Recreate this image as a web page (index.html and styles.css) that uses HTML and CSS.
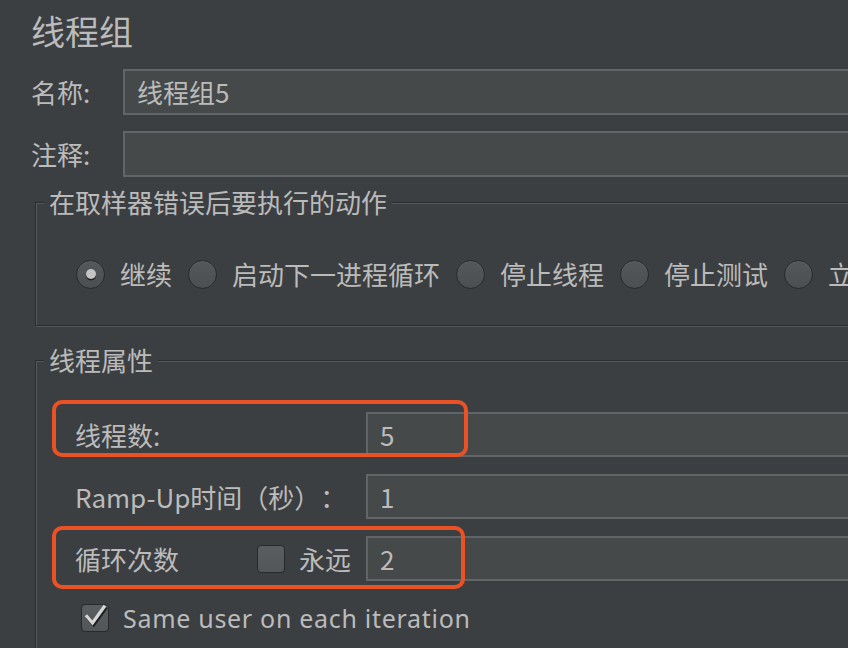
FILE: index.html
```html
<!DOCTYPE html>
<html lang="zh">
<head>
<meta charset="utf-8">
<title>线程组</title>
<link rel="stylesheet" href="styles.css">
</head>
<body>
<div class="page">
  <h1 class="title">线程组</h1>

  <div class="field-row name-row">
    <span class="field-label">名称:</span>
    <div class="text-input">线程组5</div>
  </div>
  <div class="field-row comment-row">
    <span class="field-label">注释:</span>
    <div class="text-input"></div>
  </div>

  <div class="group group-actions">
    <div class="group-title">在取样器错误后要执行的动作</div>
    <div class="radio-row">
      <span class="radio checked"></span><span class="opt">继续</span>
      <span class="radio"></span><span class="opt">启动下一进程循环</span>
      <span class="radio"></span><span class="opt">停止线程</span>
      <span class="radio"></span><span class="opt">停止测试</span>
      <span class="radio"></span><span class="opt">立即停止测试</span>
    </div>
  </div>

  <div class="group group-props">
    <div class="group-title">线程属性</div>
    <div class="prop-rows">
      <div class="prop-row">
        <span class="prop-label">线程数:</span>
        <div class="text-input prop-input">5</div>
        <span class="highlight hl-1"></span>
      </div>
      <div class="prop-row">
        <span class="prop-label">Ramp-Up时间（秒）：</span>
        <div class="text-input prop-input">1</div>
      </div>
      <div class="prop-row">
        <span class="prop-label loop-label">
          <span class="loop-text">循环次数</span>
          <span class="checkbox"></span>
          <span class="forever">永远</span>
        </span>
        <div class="text-input prop-input">2</div>
        <span class="highlight hl-2"></span>
      </div>
    </div>
    <div class="same-user">
      <span class="checkbox checked">
        <svg viewBox="0 0 28 28" width="28" height="28">
          <path d="M6 14.5 L11.5 21 L23 5" fill="none" stroke="#1f2021" stroke-width="3.6" stroke-linecap="square" transform="translate(1.2,1.6)"/>
          <path d="M6 14.5 L11.5 21 L23 5" fill="none" stroke="#d6d6d6" stroke-width="3.2" stroke-linecap="square"/>
        </svg>
      </span>
      <span class="same-text">Same user on each iteration</span>
    </div>
  </div>
</div>
</body>
</html>
```

FILE: styles.css
```css
html, body {
  margin: 0;
  padding: 0;
  width: 848px;
  height: 648px;
  overflow: hidden;
  background: #3c3f41;
}

.page {
  width: 1000px;
  padding-left: 31px;
  color: #bbbbbb;
  font-family: "Noto Sans CJK SC", "Noto Sans", sans-serif;
  font-size: 26px;
  text-spacing-trim: space-all;
}

.title {
  margin: 0;
  padding-top: 11px;
  font-size: 34px;
  font-weight: 400;
  line-height: 40px;
  height: 42px;
}

.field-row {
  display: flex;
  align-items: center;
  margin-top: 16px;
  height: 46px;
}

.field-label {
  width: 92px;
  flex: none;
  line-height: 46px;
}

.text-input {
  flex: 1;
  box-sizing: border-box;
  height: 46px;
  border: 2px solid #626567;
  background: #45494a;
  padding-left: 12px;
  line-height: 42px;
  color: #bbbbbb;
}

.group {
  position: relative;
  margin-left: 4px;
  border: 1px solid #2a2c2e;
  box-shadow: inset 1px 1px 0 #55595b, 1px 1px 0 #55595b;
}

.group-title {
  width: fit-content;
  margin: -16px 0 0 8px;
  padding: 0 5px;
  background: #3c3f41;
  line-height: 30px;
  height: 30px;
}

.group-actions {
  margin-top: 25px;
  height: 122px;
}

.radio-row {
  display: flex;
  align-items: center;
  margin-top: 42px;
  padding-left: 40px;
  height: 30px;
  white-space: nowrap;
}

.radio {
  flex: none;
  box-sizing: border-box;
  width: 29px;
  height: 29px;
  border-radius: 50%;
  border: 1.5px solid #27292a;
  background: linear-gradient(#54585a, #4b4f51);
  box-shadow: inset 0 1px 0 #5e6264;
  position: relative;
}

.radio.checked::after {
  content: "";
  position: absolute;
  left: 8.5px;
  top: 8px;
  width: 10px;
  height: 10px;
  border-radius: 50%;
  background: #c4c4c4;
  box-shadow: 0 1.5px 0 #1e1f20;
}

.opt {
  margin-left: 15px;
  margin-right: 16px;
  line-height: 30px;
}

.group-props {
  margin-top: 34px;
  height: 400px;
}

.prop-rows {
  display: flex;
  flex-direction: column;
  gap: 17px;
  margin-top: 37px;
  padding-left: 39px;
}

.prop-row {
  position: relative;
  display: flex;
  align-items: center;
  height: 45px;
}

.prop-row .text-input {
  height: 45px;
  line-height: 41px;
}

.prop-label {
  flex: none;
  width: 291px;
  line-height: 45px;
  white-space: nowrap;
}

.loop-label {
  display: flex;
  align-items: center;
}

.loop-text {
  width: 182px;
}

.forever {
  margin-left: 14px;
}

.checkbox {
  flex: none;
  box-sizing: border-box;
  width: 28px;
  height: 28px;
  border-radius: 4px;
  border: 1.5px solid #27292a;
  background: linear-gradient(#5b5e60, #535658);
  display: inline-block;
  position: relative;
}

.checkbox svg {
  position: absolute;
  left: -1.5px;
  top: -3px;
}

.highlight {
  position: absolute;
  box-sizing: border-box;
  border: 4px solid #ea5226;
  border-radius: 10px;
  pointer-events: none;
}

.hl-1 {
  left: -23px;
  top: -12px;
  width: 416px;
  height: 57px;
}

.hl-2 {
  left: -23px;
  top: -10px;
  width: 413px;
  height: 63px;
}

.same-user {
  display: flex;
  align-items: center;
  margin-top: 23px;
  padding-left: 45px;
  height: 28px;
}

.same-text {
  margin-left: 14px;
  font-family: "Noto Sans", sans-serif;
  font-size: 25px;
  line-height: 28px;
  letter-spacing: 0.7px;
}
```
